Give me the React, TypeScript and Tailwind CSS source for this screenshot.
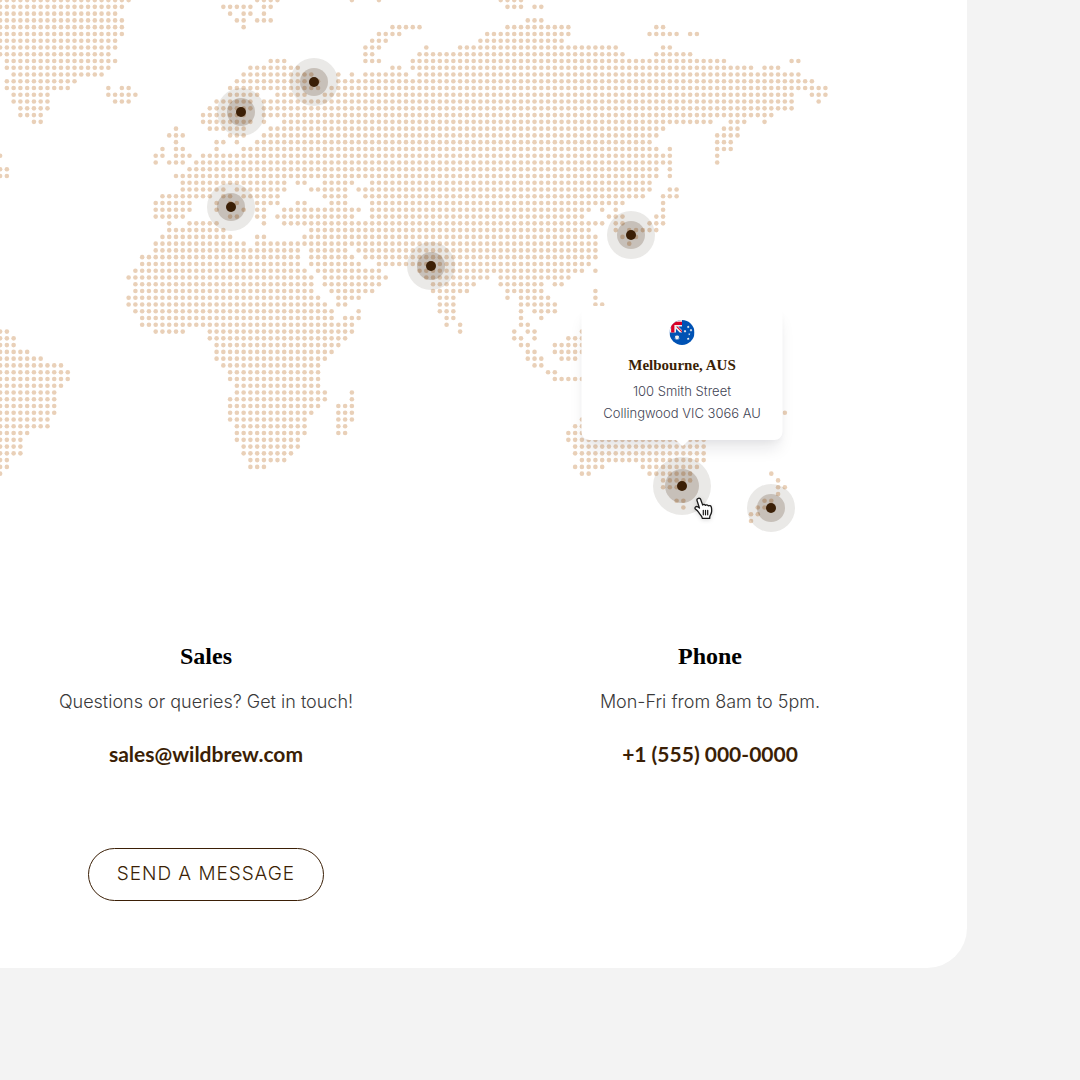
import React from "react";

const PITCH = 6.765;
const MAP_WIDTH = 840;
const MAP_HEIGHT = 540;

// One entry per row of dots; each item is a column or a run of columns.
const LAND: string[] = [
  "0-19 38-41 52 56 74-77",
  "0-18 33-37 39-40 75-77 79-80",
  "0-17 34 36-37 39",
  "0-18 35-36 38-40 78-80",
  "0-18 36 58-62 75-84 97-98",
  "0-18 56-59 72-84 96-100 102-103",
  "0-17 55-57 71-83",
  "0-17 54-56 63 68-91 98-99",
  "0-16 54-55 62-92 97-102",
  "1-17 40-42 54-56 61-107 117-118",
  "1-16 37-44 58-59 61-111 113-115",
  "2-15 36-46 50 52 54-60 62-118",
  "1-11 35-47 50-120",
  "1-10 16 18-19 34-47 49-122",
  "2-7 16-20 34-38 41-45 48-117 120-122",
  "2-7 17-19 32-37 39-117 121",
  "3-7 31-37 39-117",
  "3-6 30-36 39-114",
  "5-6 30-37 39 42-105 108-110 113",
  "26 31-36 40-98 107-109",
  "25-27 34-36 39-97 106-109",
  "26 32-33 35 38-96 106-108",
  "24 26-27 32 36-97 99 106-108",
  "0 23-24 26-28 30-99 106",
  "23 25-27 29-99 106",
  "0-1 28-97 99",
  "0-1 26-97 99",
  "27-42 44-45 48-52 55-96",
  "27-33 35-42 46-51 53-96 99-100",
  "24-31 33-34 36-41 48-51 54-95 98-100",
  "23-28 32 34-35 38-41 44-45 49-51 55-92 98",
  "23-28 32 34 36 38-39 42-53 55-87 89 91 98",
  "23-27 34-35 38-39 41-52 55-86 90-92 97-98",
  "25 28-32 39 42-89 91-92 96-98",
  "25-33 46-87 91 93-97",
  "24-34 38-39 45-88 92 94",
  "23-36 38-88 93",
  "23-44 46-51 53-88",
  "21-44 46-52 54-88",
  "21-44 46-53 56-87",
  "20-45 47-56 62-86 88",
  "19-46 48-57 63-72 74-84",
  "20-46 48-56 64-70 74-80 82-83",
  "20-46 49-55 64-69 75-80 88",
  "19-47 50-53 65-67 75 77-81 88",
  "19-48 50-51 65-67 77-82 88-89",
  "20-49 53 65-67 77 79-82",
  "21-49 51-53 66-67 77 80",
  "21-52 66 68 77-78",
  "0-1 23-27 31-52 68 76 78-79 86",
  "0-2 31-51 76-77 79 84-86",
  "0-2 32-50 77-78 82-86",
  "0-4 32-49 78-79 82-86",
  "0-6 32-48 78-80 83-85",
  "0-9 33-47 79-80",
  "0-10 34-47 81-82",
  "0-10 34-47 82-86",
  "0-9 35-47",
  "0-8 35-48 52",
  "0-8 34-48 52",
  "0-8 34-47 50-52",
  "0-8 34-46 50-52 116",
  "0-7 34-45 50-52 86",
  "0-7 35-45 50-51 85-86",
  "0-4 35-45 50-51 84-86",
  "0-3 35-44 84-104",
  "0-3 36-44 85-104",
  "0-3 36-43 85-104",
  "0-1 37-42 86-104",
  "0-1 37-39 85-89 95-103",
  "0 86-87 96-102 114",
  "98-102 115",
  "98-101 115-116",
  "115",
  "100-101 113-114",
  "101 112-113",
  "111-112",
  "111",
];

type Pin = { city: string; x: number; y: number; active?: boolean };

const PINS: Pin[] = [
  { city: "Helsinki", x: 314, y: 82 },
  { city: "Oslo", x: 241, y: 112 },
  { city: "Barcelona", x: 231, y: 207 },
  { city: "Tokyo", x: 631, y: 235 },
  { city: "Delhi", x: 431, y: 266 },
  { city: "Auckland", x: 771, y: 508 },
  { city: "Melbourne", x: 682, y: 486, active: true },
];

function expandRow(row: string): number[] {
  return row.split(" ").flatMap((run) => {
    const [from, to = from] = run.split("-").map(Number);
    return Array.from({ length: to - from + 1 }, (_, i) => from + i);
  });
}

function DottedMap() {
  return (
    <svg
      className="block h-full w-full"
      viewBox={`0 0 ${MAP_WIDTH} ${MAP_HEIGHT}`}
      fill="#e9d0b8"
      aria-hidden="true"
    >
      {LAND.map((row, r) =>
        expandRow(row).map((c) => (
          <circle key={`${r}-${c}`} cx={c * PITCH + 0.1} cy={r * PITCH + 0.1} r={2.3} />
        ))
      )}
    </svg>
  );
}

const STAR =
  "0,0 7,14.7 22.9,11 15.8,25.7 28.5,35.8 12.7,39.4 12.7,55.7 0,45.5 -12.7,55.7 -12.7,39.4 -28.5,35.8 -15.8,25.7 -22.9,11 -7,14.7";

function AustraliaFlag() {
  return (
    <svg className="size-[25px]" viewBox="0 0 512 512" role="img" aria-label="Australia">
      <circle cx="256" cy="256" r="256" fill="#0052b4" />
      <path fill="#f0f0f0" d="M256 0C114.600 0 0 114.600 0 256h133.600v-75.200L208.800 256H256v-47.200l-75.200-75.200H256z" />
      <path fill="#d80027" d="M129.500 33.400A257 257 0 0 0 33.400 129.500V256h66.800V100.200H256V33.400z" />
      <path fill="#d80027" d="M256 224.500l-91-90.900h-31.400L256 256z" />
      <g fill="#f0f0f0">
        <polygon points={STAR} transform="translate(154.400 300.500) scale(2)" />
        <polygon points={STAR} transform="translate(383.300 356.200)" />
        <polygon points={STAR} transform="translate(317.900 200.300)" />
        <polygon points={STAR} transform="translate(383.300 111.300)" />
        <polygon points={STAR} transform="translate(440.400 178)" />
        <polygon points="405.500,267 411.100,284 428.900,284 414.500,294.500 420,311.500 405.500,301 391.100,311.500 396.600,294.500 382.200,284 400,284" />
      </g>
    </svg>
  );
}

function HandCursor() {
  return (
    <svg
      className="pointer-events-none absolute top-[40px] left-[41px] h-[24px] w-[20px] drop-shadow-sm"
      viewBox="0 0 20 24"
      aria-hidden="true"
    >
      <path
        d="M4.300 1.300c1-.4 2 .1 2.400 1.200l2 5.600c.2-.8 2.100-1.100 2.700.3.700-.9 2.300-.7 2.800.4 1.200-.6 2.900-.1 3.200 1.500.3 1.700.4 3.900 0 5.500-.4 1.400-1.200 2.400-1.600 3.700l-.1 1.900H8.300l-.4-1.600c-.9-1.500-2.200-2.900-3.200-4.500-.8-1.200-1.700-2.100-2.900-2.900-1.100-.8-1.100-1.900-.3-2.500 1.200-.9 2.800 0 4 1.200L3 3.500c-.3-.9.300-1.900 1.300-2.200z"
        fill="#fff"
        stroke="#1a1a1a"
        strokeWidth="1.3"
        strokeLinejoin="round"
      />
      <path d="M9.300 13.300v4.500M11.500 13.300v4.500M13.700 13.300v4.500" stroke="#1a1a1a" strokeWidth="1.2" strokeLinecap="round" />
    </svg>
  );
}

function OfficeCard() {
  return (
    <div
      role="tooltip"
      className="absolute bottom-[46px] left-1/2 w-[201px] -translate-x-1/2 rounded-lg bg-white px-4 pt-[14px] pb-4 text-center shadow-[0_12px_16px_-4px_rgba(16,24,40,0.1),0_4px_6px_-2px_rgba(16,24,40,0.04)]"
    >
      <div className="flex justify-center">
        <AustraliaFlag />
      </div>
      <p className="mt-2 font-['Liberation_Serif',serif] text-[15px] leading-6 font-bold whitespace-nowrap text-[#3b1f06]">
        Melbourne, AUS
      </p>
      <p className="mt-[3px] font-['Inter',sans-serif] text-[13px] leading-[22px] font-light whitespace-nowrap text-[#3f4454]">
        100 Smith Street
        <br />
        Collingwood VIC 3066 AU
      </p>
      <span className="absolute -bottom-1 left-1/2 size-3 -translate-x-1/2 rotate-45 rounded-xs bg-white" />
    </div>
  );
}

function MapPin({ pin }: { pin: Pin }) {
  return (
    <div className="absolute" style={{ left: pin.x, top: pin.y }}>
      <button
        type="button"
        aria-label={pin.city}
        className={
          pin.active
            ? "absolute flex size-[58px] -translate-1/2 items-center justify-center rounded-full bg-[#2f2810]/10"
            : "absolute flex size-12 -translate-1/2 items-center justify-center rounded-full bg-[#2f2810]/10"
        }
      >
        <span
          className={
            pin.active
              ? "flex size-[34px] items-center justify-center rounded-full bg-[#3b1f06]/20"
              : "flex size-7 items-center justify-center rounded-full bg-[#3b1f06]/20"
          }
        >
          <span className="size-[10px] rounded-full bg-[#3b1f06]" />
        </span>
      </button>
      {pin.active && (
        <div className="absolute size-0">
          <OfficeCard />
        </div>
      )}
    </div>
  );
}

type Contact = { title: string; text: string; link: string; href: string };

const CONTACTS: Contact[] = [
  {
    title: "Sales",
    text: "Questions or queries? Get in touch!",
    link: "sales@wildbrew.com",
    href: "mailto:sales@wildbrew.com",
  },
  {
    title: "Phone",
    text: "Mon-Fri from 8am to 5pm.",
    link: "+1 (555) 000-0000",
    href: "tel:+15550000000",
  },
];

function ContactColumn({ contact, children }: { contact: Contact; children?: React.ReactNode }) {
  return (
    <section className="flex flex-col items-center text-center">
      <h2 className="font-['Liberation_Serif',serif] text-2xl leading-8 font-bold text-black">{contact.title}</h2>
      <p className="mt-4 font-['Inter',sans-serif] text-lg leading-7 font-light text-[#3a3a3a]">{contact.text}</p>
      <a href={contact.href} className="mt-6 font-['Lato',sans-serif] text-[21px] leading-7 font-bold text-[#3b1f06]">
        {contact.link}
      </a>
      {children}
    </section>
  );
}

export default function App() {
  return (
    <div className="min-h-screen overflow-hidden bg-[#f3f3f3] pr-[113px] pb-[112px]">
      <main className="rounded-br-[40px] bg-white pb-[67px]">
        <div className="relative h-[540px] w-[840px]">
          <DottedMap />
          {PINS.map((pin) => (
            <MapPin key={pin.city} pin={pin} />
          ))}
          <div className="absolute top-[457px] left-[653px]">
            <HandCursor />
          </div>
        </div>
        <div className="mt-[100px] mr-[5px] -ml-[46px] grid grid-cols-2">
          <ContactColumn contact={CONTACTS[0]}>
            <button
              type="button"
              className="mt-20 h-[53px] rounded-full border border-[#3b1f06] px-7 font-['Inter',sans-serif] text-[19px] font-light tracking-wider text-[#3b1f06]"
            >
              SEND A MESSAGE
            </button>
          </ContactColumn>
          <ContactColumn contact={CONTACTS[1]} />
        </div>
      </main>
    </div>
  );
}
